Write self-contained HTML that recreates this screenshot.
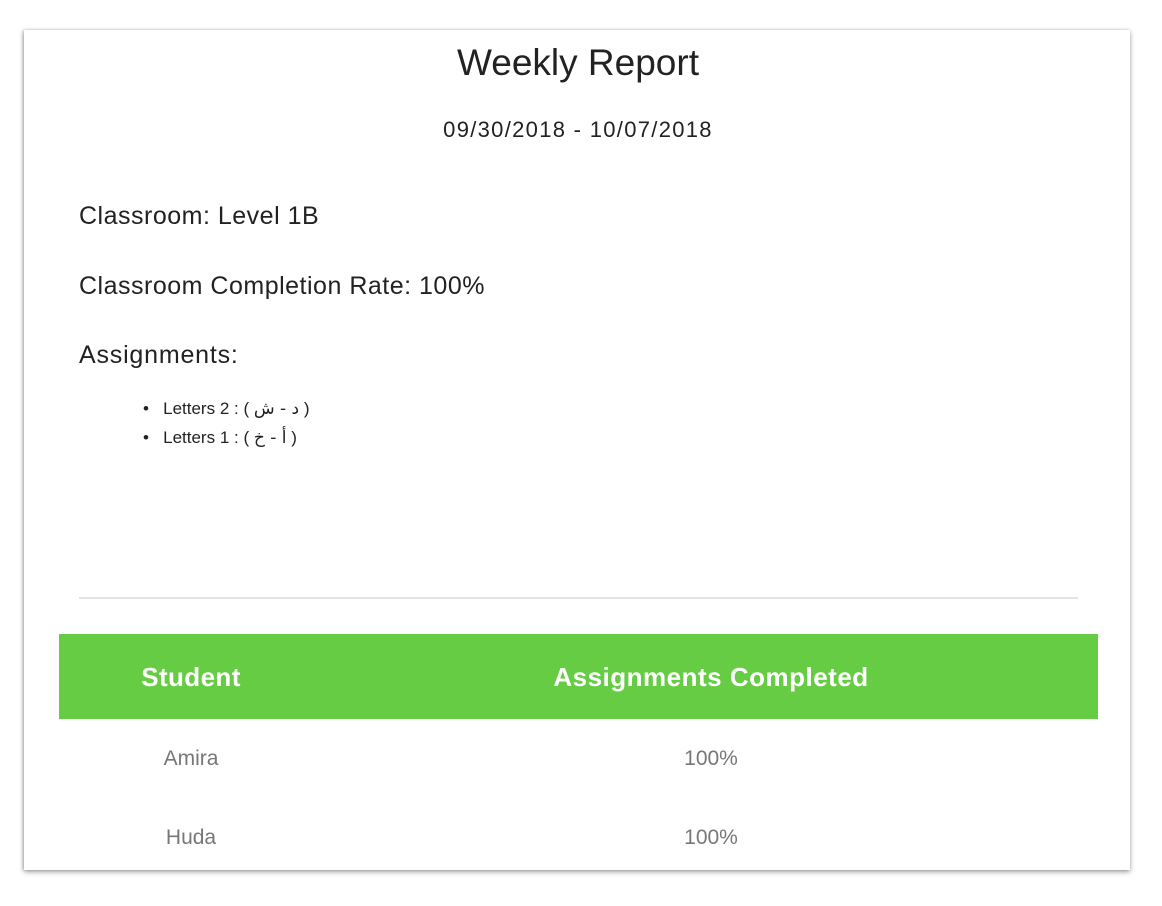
<!DOCTYPE html>
<html><head><meta charset="utf-8"><style>
body{margin:0;width:1162px;height:906px;background:#fff;position:relative;overflow:hidden;font-family:"Liberation Sans","DejaVu Sans",sans-serif;color:#222}
.card{position:absolute;left:24px;top:30px;width:1106px;height:840px;background:#fff;box-shadow:0 2px 5px rgba(0,0,0,.35),-1px 0 3px rgba(0,0,0,.2)}
.t{position:absolute;white-space:nowrap}
.c{transform:translateX(-50%)}
</style></head><body>
<div class="card"></div>
<div class="t c" style="left:578px;top:42px;font-size:37px;">Weekly Report</div>
<div class="t c" style="left:578px;top:117px;font-size:22px;letter-spacing:1.3px">09/30/2018 - 10/07/2018</div>
<div class="t" style="left:79px;top:202px;font-size:25px;letter-spacing:0.5px">Classroom: Level 1B</div>
<div class="t" style="left:79px;top:272px;font-size:25px;letter-spacing:0.5px">Classroom Completion Rate: 100%</div>
<div class="t" style="left:79px;top:341px;font-size:25px;letter-spacing:0.8px">Assignments:</div>
<div class="t" style="left:143px;top:399px;font-size:17px;">•&nbsp;&nbsp;&nbsp;Letters 2 : ( <span style="font-family:'DejaVu Sans',sans-serif">د - ش</span> )</div>
<div class="t" style="left:143px;top:428px;font-size:17px;">•&nbsp;&nbsp;&nbsp;Letters 1 : ( <span style="font-family:'DejaVu Sans',sans-serif">أ - خ</span> )</div>
<div style="position:absolute;left:79px;top:597px;width:999px;height:2px;background:#e4e4e4"></div>
<div style="position:absolute;left:59px;top:634px;width:1039px;height:85px;background:#66cc44"></div>
<div class="t c" style="left:191px;top:662px;font-size:26px;font-weight:bold;color:#fff;letter-spacing:0.4px">Student</div>
<div class="t c" style="left:711px;top:662px;font-size:26px;font-weight:bold;color:#fff;letter-spacing:0.5px">Assignments Completed</div>
<div class="t c" style="left:191px;top:747px;font-size:21px;color:#777">Amira</div>
<div class="t c" style="left:711px;top:747px;font-size:21px;color:#777">100%</div>
<div class="t c" style="left:191px;top:826px;font-size:21px;color:#777">Huda</div>
<div class="t c" style="left:711px;top:826px;font-size:21px;color:#777">100%</div>
</body></html>
